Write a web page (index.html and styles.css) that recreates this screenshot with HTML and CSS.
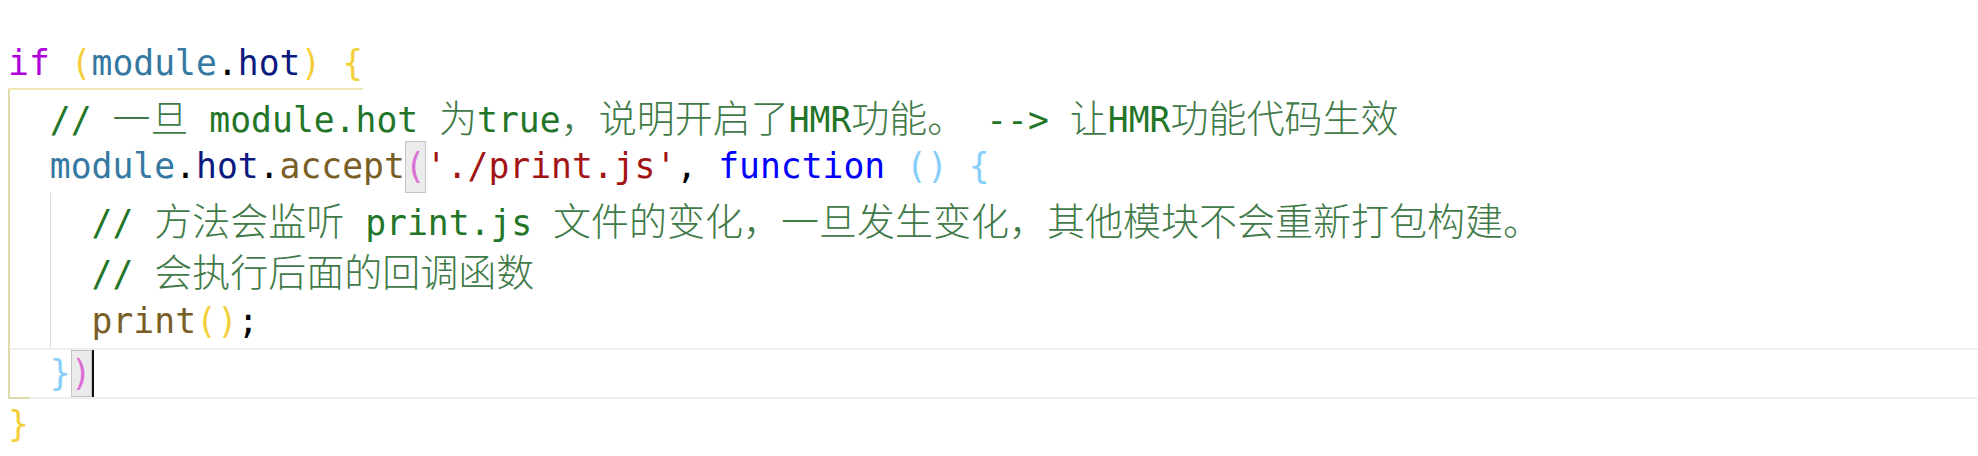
FILE: index.html
```html
<!DOCTYPE html>
<html lang="zh">
<head>
<meta charset="utf-8">
<title>HMR code</title>
<link rel="stylesheet" href="styles.css">
</head>
<body>
<div class="editor">
  <div class="line first"><span class="kw">if</span> <span class="b1">(</span><span class="obj">module</span><span class="pun">.</span><span class="prop">hot</span><span class="b1">)</span> <span class="b1">{</span></div>
  <div class="block outer">
    <div class="line"><span class="cm">// <span class="zh">一旦</span> module.hot <span class="zh">为</span>true<span class="zh">，说明开启了</span>HMR<span class="zh">功能。</span> --&gt; <span class="zh">让</span>HMR<span class="zh">功能代码生效</span></span></div>
    <div class="line"><span class="obj">module</span><span class="pun">.</span><span class="prop">hot</span><span class="pun">.</span><span class="fn">accept</span><span class="match b2">(</span><span class="str">'./print.js'</span><span class="pun">,</span> <span class="st">function</span> <span class="b3">()</span> <span class="b3">{</span></div>
    <div class="block inner">
      <div class="line"><span class="cm">// <span class="zh">方法会监听</span> print.js <span class="zh">文件的变化，一旦发生变化，其他模块不会重新打包构建。</span></span></div>
      <div class="line"><span class="cm">// <span class="zh">会执行后面的回调函数</span></span></div>
      <div class="line"><span class="fn">print</span><span class="b1">()</span><span class="pun">;</span></div>
    </div>
    <div class="line current"><span class="b3">}</span><span class="match b2">)</span><span class="cursor"></span></div>
  </div>
  <div class="line"><span class="b1">}</span></div>
</div>
</body>
</html>
```
FILE: styles.css
```css
:root {
  --cw: 20.9px;
  --lh: 51.6px;
}

html, body {
  margin: 0;
  padding: 0;
  background: #ffffff;
}

.editor {
  padding-top: 38px;
  font-family: "DejaVu Sans Mono", "Liberation Mono", "Noto Sans CJK SC", monospace;
  font-size: 34.7px;
  line-height: var(--lh);
  color: #000000;
}

.line {
  height: var(--lh);
  white-space: pre;
  box-sizing: border-box;
}

.line.first {
  width: fit-content;
  margin-left: 8px;
  border-bottom: 2px solid #f1e7b4;
}

.block.outer {
  position: relative;
  margin-left: 8px;
  border-left: 2px solid #e0dbab;
}

.block.outer::after {
  content: "";
  position: absolute;
  left: -2px;
  bottom: 0;
  width: 22px;
  height: 2px;
  background: #e0dbab;
}

.block.outer > .line {
  padding-left: 39.8px;
}

.block.inner {
  margin-left: 39.8px;
  border-left: 1px solid #dcdcdc;
}

.block.inner > .line {
  padding-left: 40.8px;
}

.editor > .line:last-child {
  padding-left: 8px;
}

.line.current {
  border-top: 2px solid #eeeeee;
  border-bottom: 2px solid #eeeeee;
  line-height: calc(var(--lh) - 4px);
}

.zh {
  font-family: "Noto Sans CJK SC", sans-serif;
  font-size: 38px;
  font-weight: 300;
}

.kw { color: #af00db; }
.obj { color: #3579a2; }
.prop { color: #0c1a80; }
.pun { color: #000000; }
.fn { color: #795e26; }
.str { color: #a31515; }
.st { color: #0000ff; }
.cm { color: #237527; }
.cm .zh { color: #3f7a48; }
.b1 { color: #f4cf3c; }
.b2 { color: #da70d6; }
.b3 { color: #87cefa; }

.match {
  display: inline-block;
  width: var(--cw);
  height: 100%;
  vertical-align: top;
  background: #ebebeb;
  box-shadow: inset 0 0 0 1px #c4c4c4;
}

.cursor {
  display: inline-block;
  width: 2px;
  height: 100%;
  vertical-align: top;
  background: #111111;
}
```
